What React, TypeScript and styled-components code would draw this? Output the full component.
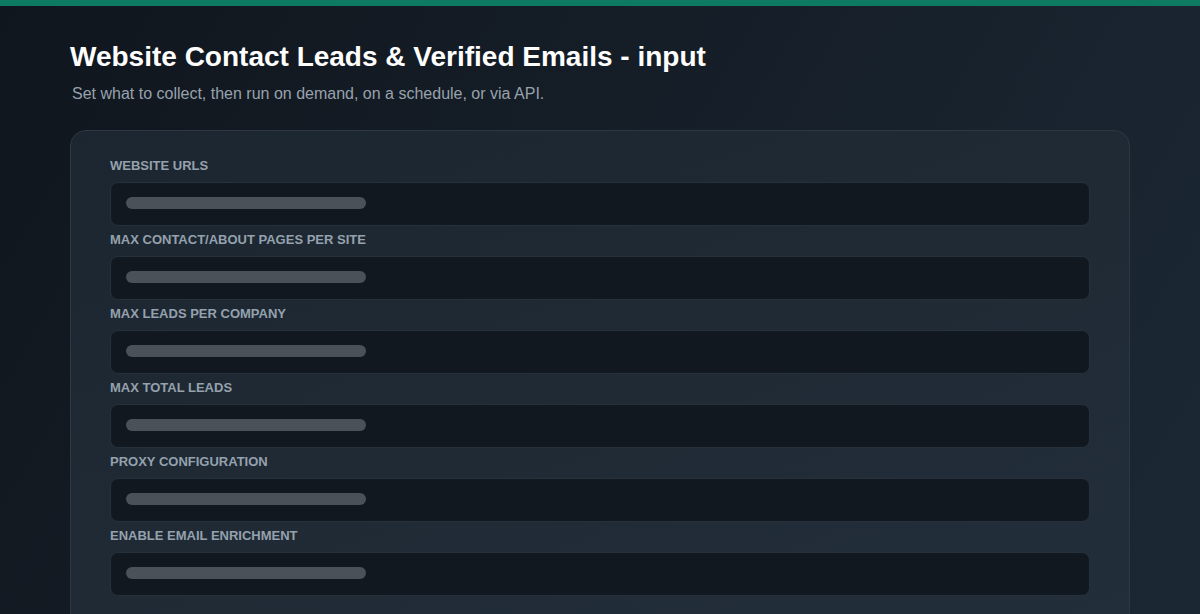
import styled, { createGlobalStyle } from 'styled-components';

const GlobalStyle = createGlobalStyle`
  html, body {
    margin: 0;
    padding: 0;
  }
  body {
    background: #121921;
    font-family: "Liberation Sans", Arial, Helvetica, sans-serif;
    -webkit-font-smoothing: antialiased;
  }
`;

const Page = styled.div`
  min-height: 100vh;
  background: linear-gradient(120deg, #10161e 0%, #141c25 35%, #192430 75%, #1b2834 100%);
  border-top: 6px solid #0e7a62;
  box-sizing: border-box;
`;

const Container = styled.main`
  max-width: 1060px;
  margin: 0 auto;
  padding: 34px 0 40px;
`;

const Title = styled.h1`
  margin: 0;
  font-size: 28px;
  line-height: 34px;
  font-weight: 700;
  color: #ffffff;
`;

const Subtitle = styled.p`
  margin: 10px 0 0 2px;
  font-size: 16px;
  line-height: 20px;
  color: #98a2ad;
`;

const Card = styled.section`
  margin-top: 26px;
  padding: 27px 39px 32px;
  border: 1px solid #2c3843;
  border-radius: 16px;
  background: linear-gradient(160deg, #1c2630 0%, #1f2a35 50%, #222e3a 100%);
  display: flex;
  flex-direction: column;
  gap: 6px;
`;

const Field = styled.div`
  display: flex;
  flex-direction: column;
`;

const Label = styled.label`
  font-size: 13px;
  line-height: 16px;
  font-weight: 700;
  color: #95a1ad;
  text-transform: uppercase;
  margin-bottom: 8px;
`;

const InputBox = styled.div`
  height: 44px;
  box-sizing: border-box;
  padding: 0 15px;
  display: flex;
  align-items: center;
  background: #111820;
  border: 1px solid #27313b;
  border-radius: 8px;
`;

const Placeholder = styled.span<{ $width: number }>`
  display: block;
  width: ${(p) => p.$width}px;
  height: 12px;
  margin-top: -2px;
  border-radius: 6px;
  background: #4a5159;
`;

const fields = [
  'Website URLs',
  'Max contact/about pages per site',
  'Max leads per company',
  'Max total leads',
  'Proxy configuration',
  'Enable email enrichment',
];

export default function App() {
  return (
    <>
      <GlobalStyle />
      <Page>
        <Container>
          <Title>Website Contact Leads &amp; Verified Emails - input</Title>
          <Subtitle>Set what to collect, then run on demand, on a schedule, or via API.</Subtitle>
          <Card>
            {fields.map((name) => (
              <Field key={name}>
                <Label>{name}</Label>
                <InputBox>
                  <Placeholder $width={240} />
                </InputBox>
              </Field>
            ))}
          </Card>
        </Container>
      </Page>
    </>
  );
}
